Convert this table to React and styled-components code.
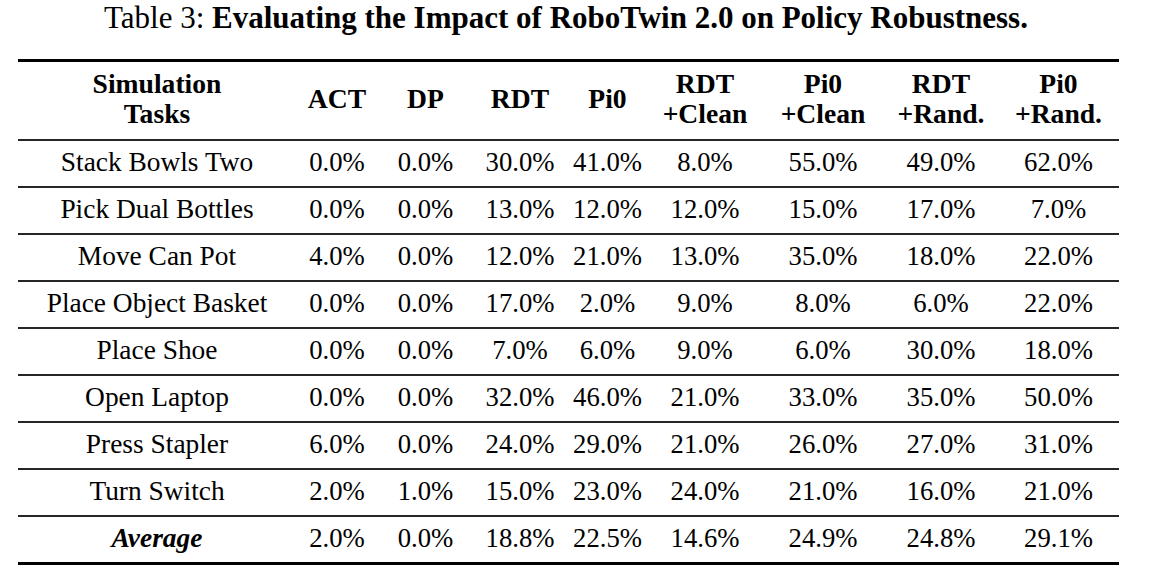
import styled, { createGlobalStyle } from "styled-components";

const GlobalStyle = createGlobalStyle`
  html, body {
    margin: 0;
    padding: 0;
    background: #ffffff;
  }
  body {
    font-family: "Liberation Serif", serif;
    color: #000;
  }
`;

const columns = [278, 82, 95, 94, 81, 114, 122, 114, 121];

const headers = [
  ["Simulation", "Tasks"],
  ["ACT"],
  ["DP"],
  ["RDT"],
  ["Pi0"],
  ["RDT", "+Clean"],
  ["Pi0", "+Clean"],
  ["RDT", "+Rand."],
  ["Pi0", "+Rand."],
];

const rows = [
  ["Stack Bowls Two", "0.0%", "0.0%", "30.0%", "41.0%", "8.0%", "55.0%", "49.0%", "62.0%"],
  ["Pick Dual Bottles", "0.0%", "0.0%", "13.0%", "12.0%", "12.0%", "15.0%", "17.0%", "7.0%"],
  ["Move Can Pot", "4.0%", "0.0%", "12.0%", "21.0%", "13.0%", "35.0%", "18.0%", "22.0%"],
  ["Place Object Basket", "0.0%", "0.0%", "17.0%", "2.0%", "9.0%", "8.0%", "6.0%", "22.0%"],
  ["Place Shoe", "0.0%", "0.0%", "7.0%", "6.0%", "9.0%", "6.0%", "30.0%", "18.0%"],
  ["Open Laptop", "0.0%", "0.0%", "32.0%", "46.0%", "21.0%", "33.0%", "35.0%", "50.0%"],
  ["Press Stapler", "6.0%", "0.0%", "24.0%", "29.0%", "21.0%", "26.0%", "27.0%", "31.0%"],
  ["Turn Switch", "2.0%", "1.0%", "15.0%", "23.0%", "24.0%", "21.0%", "16.0%", "21.0%"],
];

const average = ["2.0%", "0.0%", "18.8%", "22.5%", "14.6%", "24.9%", "24.8%", "29.1%"];

function App() {
  return (
    <Page>
      <GlobalStyle />
      <Caption>
        Table 3: <strong>Evaluating the Impact of RoboTwin 2.0 on Policy Robustness.</strong>
      </Caption>
      <Table>
        <colgroup>
          {columns.map((w, i) => (
            <col key={i} style={{ width: w }} />
          ))}
        </colgroup>
        <thead>
          <tr>
            {headers.map((lines, i) => (
              <HeadCell key={i}>
                {lines.map((l, j) => (
                  <div key={j}>{l}</div>
                ))}
              </HeadCell>
            ))}
          </tr>
        </thead>
        <tbody>
          {rows.map((row, i) => (
            <tr key={i}>
              {row.map((v, j) => (
                <Cell key={j} $task={j === 0}>
                  {v}
                </Cell>
              ))}
            </tr>
          ))}
          <tr>
            <Cell $last $task>
              <AverageLabel>Average</AverageLabel>
            </Cell>
            {average.map((v, j) => (
              <Cell key={j} $last>
                {v}
              </Cell>
            ))}
          </tr>
        </tbody>
      </Table>
    </Page>
  );
}

const Page = styled.div`
  width: 1101px;
  padding-left: 18px;
`;

const Caption = styled.div`
  font-size: 31px;
  line-height: 36px;
  text-align: center;
  margin-left: -5px;
  margin-bottom: 23px;

  strong {
    font-weight: bold;
  }
`;

const Table = styled.table`
  width: 1101px;
  table-layout: fixed;
  border-collapse: separate;
  border-spacing: 0;
  font-family: "Liberation Serif", serif;
  font-size: 26.7px;
  line-height: 30px;
  border-top: 3px solid #000;
`;

const HeadCell = styled.th`
  height: 79px;
  box-sizing: border-box;
  padding: 0 0 3px;
  font-weight: bold;
  font-size: 27.6px;
  text-align: center;
  vertical-align: middle;
  border-bottom: 2px solid #262626;
`;

const Cell = styled.td`
  height: ${(p) => (p.$last ? "48px" : "47px")};
  box-sizing: border-box;
  padding: 0 0 4px;
  font-size: ${(p) => (p.$task ? "27.4px" : "26.7px")};
  text-align: center;
  vertical-align: middle;
  white-space: nowrap;
  border-bottom: ${(p) => (p.$last ? "3px solid #000" : "2px solid #262626")};
`;

const AverageLabel = styled.span`
  font-weight: bold;
  font-style: italic;
`;

export default App;
